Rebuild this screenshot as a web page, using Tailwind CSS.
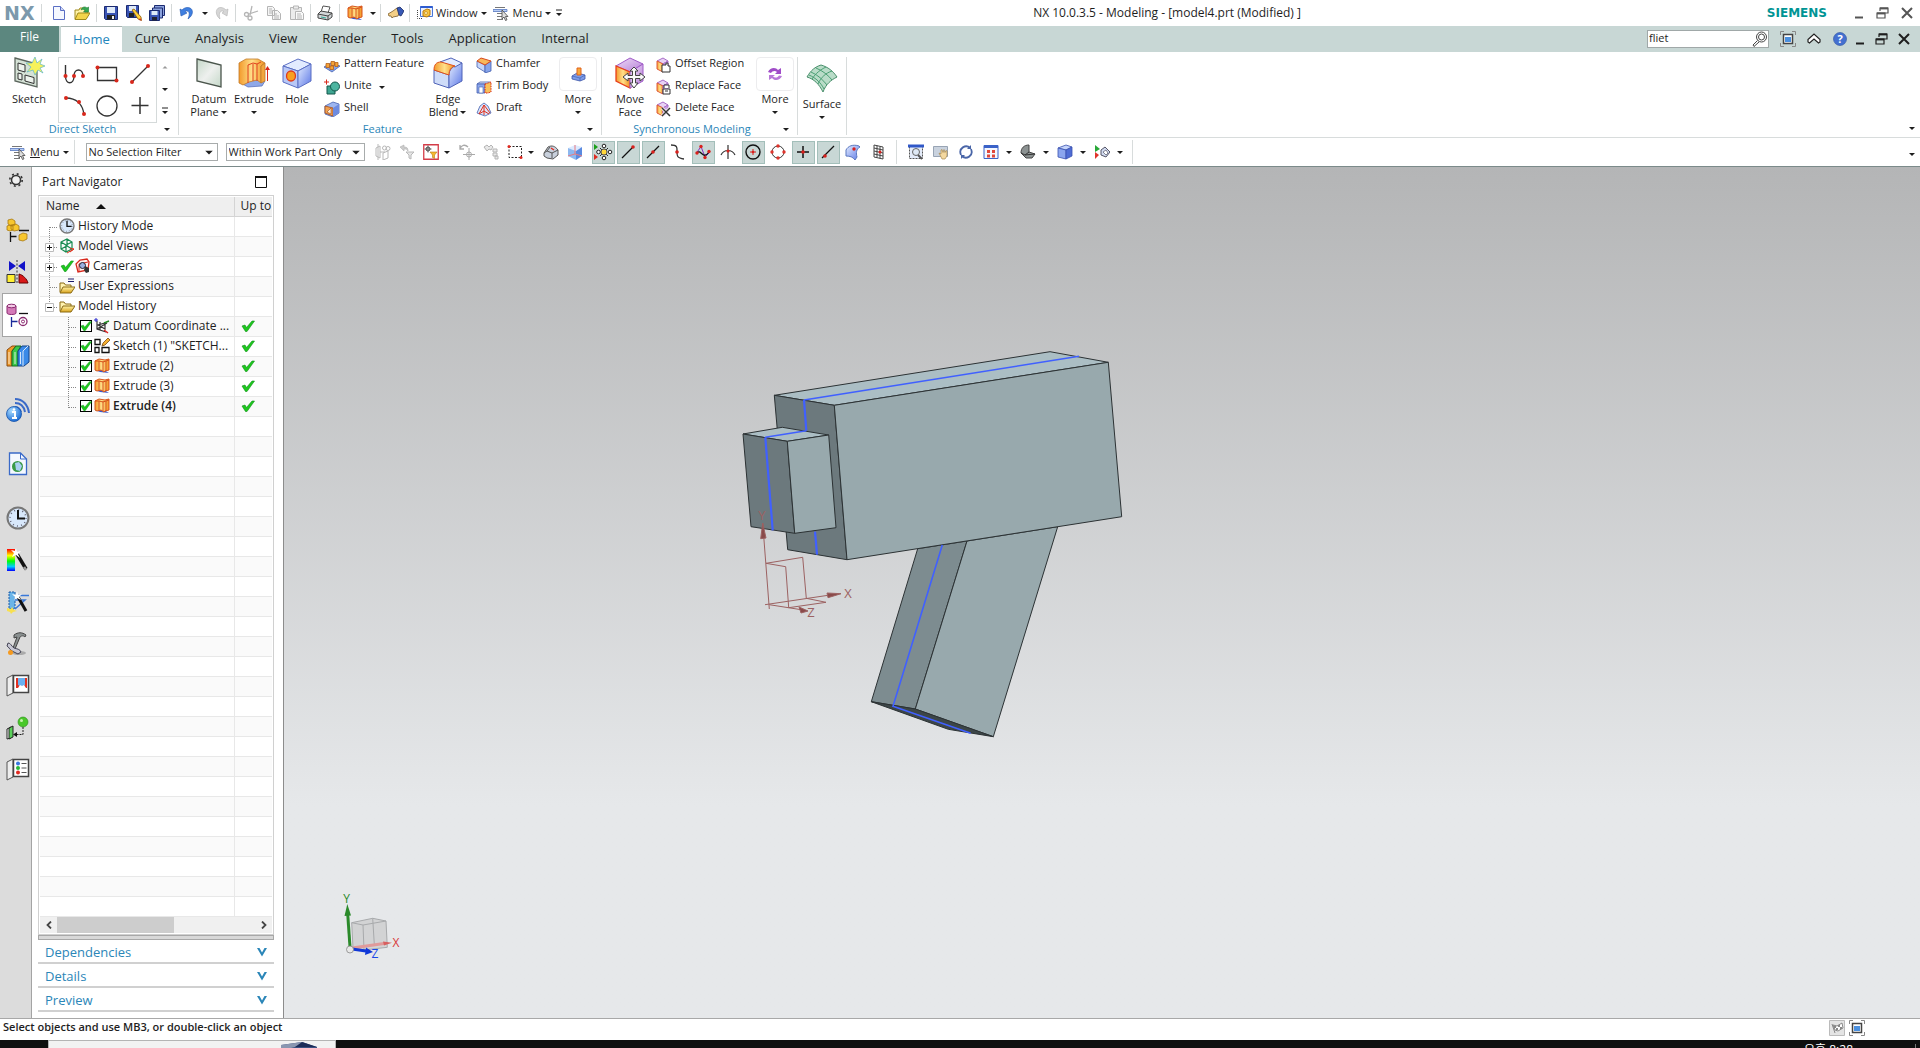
<!DOCTYPE html>
<html lang="en">
<head>
  <meta charset="utf-8">
  <meta name="viewport" content="width=device-width, initial-scale=1">
  <title>NX 10.0.3.5 - Modeling - [model4.prt (Modified) ]</title>
  <script src="https://cdn.jsdelivr.net/npm/@tailwindcss/browser@4"></script>
</head>
<body class="flex h-screen flex-col overflow-hidden bg-white font-['Open_Sans','Noto_Sans_CJK_KR',sans-serif] text-[11px] text-[#1e1e1e]">

<!-- Shared icons -->
<svg class="absolute size-0" aria-hidden="true">
  <defs>
    <linearGradient id="g-blue" x1="0" y1="0" x2="1" y2="1"><stop offset="0" stop-color="#e4edff"/><stop offset="1" stop-color="#5c78e6"/></linearGradient>
    <linearGradient id="g-orange" x1="0" y1="0" x2="1" y2="0"><stop offset="0" stop-color="#f39a2c"/><stop offset=".5" stop-color="#ffe08a"/><stop offset="1" stop-color="#f0901e"/></linearGradient>
    <linearGradient id="g-gold" x1="0" y1="0" x2="0" y2="1"><stop offset="0" stop-color="#fff3a8"/><stop offset="1" stop-color="#d9a21b"/></linearGradient>
    <linearGradient id="g-plane" x1="0" y1="0" x2="1" y2="1"><stop offset="0" stop-color="#c4d8c8"/><stop offset=".5" stop-color="#eef0ee"/><stop offset="1" stop-color="#c4d8c8"/></linearGradient>
    <linearGradient id="g-purple" x1="0" y1="0" x2="1" y2="1"><stop offset="0" stop-color="#efdcf8"/><stop offset="1" stop-color="#b57fd6"/></linearGradient>
    <linearGradient id="g-rainbow" x1="0" y1="0" x2="0" y2="1"><stop offset="0" stop-color="#f00"/><stop offset=".3" stop-color="#ff0"/><stop offset=".55" stop-color="#0f0"/><stop offset=".8" stop-color="#0cf"/><stop offset="1" stop-color="#00f"/></linearGradient>
    <radialGradient id="g-ball" cx=".35" cy=".3" r=".8"><stop offset="0" stop-color="#a9dcff"/><stop offset="1" stop-color="#0a5fd0"/></radialGradient>
  </defs>
  <symbol id="caret" viewBox="0 0 8 8"><path d="M1 3h6L4 6z" fill="#1e1e1e"/></symbol>
  <symbol id="caret-bar" viewBox="0 0 8 8"><path d="M1 1h6" stroke="#1e1e1e"/><path d="M1 4h6L4 7z" fill="#1e1e1e"/></symbol>
  <symbol id="menu" viewBox="0 0 16 16"><path d="M2 2.500h10M4 8.500h7M4 11.500h7M4 14.500h6" stroke="#777"/><path d="M0 4.500h14v2H0z" fill="#b9cdf2" stroke="#5577c0" stroke-width=".8"/><path d="M9 5v9l2-2 1.500 3.500 1.500-.7-1.500-3.300h2.500z" fill="#ddd" stroke="#444" stroke-width=".8"/></symbol>
  <symbol id="extrude" viewBox="0 0 16 16"><path d="M1 12l5 2 9 1-5-3z" fill="#3d59c8"/><path d="M1 3l4-2 6 1 4-1v11l-4 1-1 1-3-2-4 1-2-1z" fill="url(#g-orange)" stroke="#d8541c"/><path d="M5 3v10M9 3v10M12 3v10M1 3l4 0 4 1 6-2" stroke="#d8541c" fill="none"/></symbol>
  <symbol id="check" viewBox="0 0 14 12"><path d="M1 6l3-1 1.500 2.500L11 1h2.500L6 11.500H4.500z" fill="#1ec81e" stroke="#0f8f1a" stroke-width=".6"/></symbol>
  <symbol id="folder" viewBox="0 0 16 16"><path d="M1 13V4h4l1.500 2H12v2" fill="#fff2b0" stroke="#8a6a14"/><path d="M1 14l3-6h12l-4 6z" fill="url(#g-gold)" stroke="#8a6a14"/></symbol>
  <symbol id="restore" viewBox="0 0 16 16"><path d="M5 6V3h8v5h-3" fill="none" stroke="currentColor" stroke-width="1.200"/><path d="M5 3.400h8" stroke="currentColor" stroke-width="2"/><path d="M2 8h8v5H2z" fill="none" stroke="currentColor" stroke-width="1.200"/><path d="M2 8.400h8" stroke="currentColor" stroke-width="2"/></symbol>
  <symbol id="close" viewBox="0 0 16 16"><path d="M3 3l10 10M13 3L3 13" stroke="currentColor" stroke-width="2"/></symbol>
  <symbol id="minimize" viewBox="0 0 16 16"><path d="M4 12.500h8" stroke="currentColor" stroke-width="2"/></symbol>
  <symbol id="fit" viewBox="0 0 16 16"><path d="M4 .5H.5V4M12 .5h3.500V4M4 15.500H.5V12M12 15.500h3.500V12" fill="none" stroke="#888"/><path d="M3.500 3.500h9v9h-9z" fill="#fff" stroke="#444" stroke-width="1.500"/><path d="M5 6h6v5H5z" fill="#4a90e0"/></symbol>
  <symbol id="clock" viewBox="0 0 24 24"><circle cx="12" cy="12" r="10.500" fill="#d8e8fb" stroke="#777" stroke-width="2"/><circle cx="12" cy="12" r="8" fill="none" stroke="#667" stroke-width="1.500" stroke-dasharray="1 3.190"/><path d="M12 4v8.500h7" fill="none" stroke="#111" stroke-width="2"/></symbol>
  <symbol id="face-cube" viewBox="0 0 16 16"><path d="M2 4l6-3 5 3-5 3z" fill="#e8d2f4" stroke="#a86cc8"/><path d="M2 4l6 3v8l-6-3z" fill="url(#g-orange)" stroke="#e05a3a"/><path d="M8 7l5-3v7l-5 4z" fill="#c9a2e2" stroke="#a86cc8"/></symbol>
</svg>

<!-- Title bar -->
<header class="flex h-[26px] shrink-0 items-center bg-white">
  <div class="w-[41px] pl-1 font-['DejaVu_Sans',sans-serif] text-[19px] font-bold text-[#7c99ac]">NX</div>
  <div class="flex items-center gap-[7px] border-l border-[#d4d8d8] py-px pr-1.5 pl-[9px]">
    <button type="button" aria-label="New"><svg class="size-4" viewBox="0 0 16 16"><path d="M2.500 1.500h7l4 4v9h-11z" fill="#f5f8ff" stroke="#5b6fc4"/><path d="M9.500 1.500v4h4" fill="#cfd8f5" stroke="#5b6fc4"/></svg></button>
    <button type="button" aria-label="Open"><svg class="size-4" viewBox="0 0 16 16"><path d="M1 14V5h4l1-2h5v4h3v2" fill="#fff3a8" stroke="#a08a1c"/><path d="M1 14.500L4 8h12l-4 6.500z" fill="#f3d44a" stroke="#a08a1c"/><path d="M7 5c1-3 4-4 6-2l1.500-1v5h-5L11 5.500C10 4 8 4 7 5z" fill="#35a853" stroke="#1c7a34" stroke-width=".6"/></svg></button>
  </div>
  <div class="flex items-center gap-[7px] border-l border-[#d4d8d8] px-1.5 py-px">
    <button type="button" aria-label="Save"><svg class="size-4" viewBox="0 0 16 16"><path d="M1.500 1.500h13v13h-12l-1-1z" fill="#3a55b5" stroke="#1b2a70"/><path d="M4 2h8v6H4z" fill="#dfeaf8"/><path d="M4 10h8v4.500H4z" fill="#222"/><path d="M9 11h2v3H9z" fill="#eee"/></svg></button>
    <button type="button" aria-label="Save As"><svg class="size-4" viewBox="0 0 16 16"><path d="M.5 .5h12v12h-11l-1-1z" fill="#3a55b5" stroke="#1b2a70"/><path d="M3 1h7v5H3z" fill="#dfeaf8"/><path d="M3 8h5v4H3z" fill="#222"/><path d="M6 5l2-1 7 8 .5 3.500L12 14z" fill="#ffd23a" stroke="#8a5a10" stroke-width=".8"/><path d="M14 13l1.500 2.500L13 15z" fill="#d22"/></svg></button>
    <button type="button" aria-label="Save All"><svg class="size-4" viewBox="0 0 16 16"><path d="M5.500 .5h10v10h-10z" fill="#8ba2dd" stroke="#1b2a70"/><path d="M3.500 3h10v10h-10z" fill="#8ba2dd" stroke="#1b2a70"/><path d="M.5 5.500h10v10h-10z" fill="#3a55b5" stroke="#1b2a70"/><path d="M2.500 6h6v4h-6z" fill="#dfeaf8"/><path d="M3 12h5v3.500H3z" fill="#223"/></svg></button>
  </div>
  <div class="flex items-center gap-1.5 border-l border-[#d4d8d8] py-px pr-1 pl-[7px]">
    <button type="button" aria-label="Undo"><svg class="size-4" viewBox="0 0 16 16"><path d="M1 4l1 7 6-3-2-1.500c3-1.500 6 .5 3 7.500 7-5 5-12-1-11.500-2 .2-3.500 1-5 2.500z" fill="#3f7fe0" stroke="#2358b0" stroke-width=".6"/></svg></button>
    <button type="button" aria-label="Undo list"><svg class="size-2"><use href="#caret"/></svg></button>
    <button type="button" aria-label="Redo"><svg class="size-4" viewBox="0 0 16 16"><path d="M13 4l-1 7-5-3 2-1.500C6 5 3 7 5 14-1 9 1 2 6 2.500c2 .2 3.500 1 5 2.500z" fill="#d6d6d6" stroke="#b4b4b4" stroke-width=".6"/></svg></button>
  </div>
  <div class="flex items-center gap-[7px] border-l border-[#d4d8d8] py-px pr-[5px] pl-[7px]">
    <button type="button" aria-label="Cut"><svg class="size-4" viewBox="0 0 16 16" fill="none" stroke="#b5b5b5" stroke-width="1.300"><path d="M9 1L7 10M15 6L6 9"/><circle cx="3.500" cy="9.500" r="2"/><circle cx="7" cy="13" r="2"/></svg></button>
    <button type="button" aria-label="Copy"><svg class="size-4" viewBox="0 0 16 16" fill="#f6f6f6" stroke="#b5b5b5"><path d="M1.500 1.500h5l2 2v7h-7zM6.500 5.500h5l3 3v6h-8z"/><path d="M8 9h3M8 11h5M8 13h5M3 4h3M3 6h3M3 8h3"/></svg></button>
    <button type="button" aria-label="Paste"><svg class="size-4" viewBox="0 0 16 16" fill="#ececec" stroke="#b5b5b5"><path d="M1.500 2.500h11v12h-11z"/><path d="M4.500 1h5v3h-5z"/><path d="M6.500 6.500h6l2 2v6h-8z" fill="#fafafa"/><path d="M8 9h4M8 11h5M8 13h5"/></svg></button>
  </div>
  <div class="flex items-center border-l border-[#d4d8d8] py-px pr-1.5 pl-1.5">
    <button type="button" aria-label="Print"><svg class="size-4" viewBox="0 0 16 16"><path d="M6 1l7 1-2 6-7-1z" fill="#fff" stroke="#555"/><path d="M1 9l3-3 11 2v4l-4 3-10-2z" fill="#d2d6d8" stroke="#444"/><path d="M1 9l10 2 4-3M11 11v4" fill="none" stroke="#444"/><path d="M4 12l5 1" stroke="#3a9"/></svg></button>
  </div>
  <div class="flex items-center gap-1.5 border-l border-[#d4d8d8] py-px pr-[3px] pl-[7px]">
    <button type="button" aria-label="Extrude"><svg class="size-4"><use href="#extrude"/></svg></button>
    <button type="button" aria-label="Repeat list"><svg class="size-2"><use href="#caret"/></svg></button>
  </div>
  <div class="flex items-center border-l border-[#d4d8d8] py-px pr-[5px] pl-[7px]">
    <button type="button" aria-label="Touch mode"><svg class="size-4" viewBox="0 0 16 16"><path d="M0 9l5-3 4-3 4 3-3 5-5 1-1 1-1-2H1z" fill="#f4cf86" stroke="#7a5a28" stroke-width=".8"/><path d="M9 3l3-1 4 4-3 5-2-1z" fill="#3758b5" stroke="#1c2c66" stroke-width=".8"/></svg></button>
  </div>
  <div class="flex items-center border-l border-[#d4d8d8] py-px pl-[7px]">
    <button type="button" class="flex items-center">
      <svg class="size-4" viewBox="0 0 16 16"><path d="M3.500 1.500h12v10h-12z" fill="#eaf1ff" stroke="#4a78d8"/><path d="M3.500 2h12" stroke="#2d5bd0" stroke-width="2"/><path d="M5 13.500h-4.500v-9" fill="none" stroke="#444" stroke-dasharray="1 1"/><path d="M6 6l4-2 3 1v5l-3 2-4-1z" fill="#f8c640" stroke="#b97a10"/><circle cx="9" cy="8" r="1.500" fill="#fff0b0" stroke="#b97a10" stroke-width=".6"/></svg>
      <span class="ml-[3px]">Window</span><svg class="ml-0.5 size-2"><use href="#caret"/></svg>
    </button>
    <button type="button" class="ml-[5px] flex items-center">
      <svg class="size-4"><use href="#menu"/></svg>
      <span class="ml-1">Menu</span><svg class="ml-0.5 size-2"><use href="#caret"/></svg>
    </button>
    <button type="button" class="ml-[3px]" aria-label="Customize toolbar"><svg class="size-2"><use href="#caret-bar"/></svg></button>
  </div>
  <h1 class="flex-1 pl-1 text-center text-[12px]">NX 10.0.3.5 - Modeling - [model4.prt (Modified) ]</h1>
  <div class="font-['DejaVu_Sans',sans-serif] text-[12px] font-bold text-[#009494]">SIEMENS</div>
  <div class="ml-6 flex gap-2 pr-[5px] text-[#555]">
    <button type="button" aria-label="Minimize"><svg class="size-4"><use href="#minimize"/></svg></button>
    <button type="button" aria-label="Restore"><svg class="size-4"><use href="#restore"/></svg></button>
    <button type="button" aria-label="Close"><svg class="size-4"><use href="#close"/></svg></button>
  </div>
</header>

<!-- Ribbon tabs -->
<nav class="flex h-[26px] shrink-0 items-stretch gap-px bg-[#c8d7d5] text-[13px]">
  <button type="button" class="w-[59px] bg-[#5c877f] pb-1 text-center text-[12px] text-white">File</button>
  <a href="#" class="ml-px flex items-center border-t border-[#a8b4b2] bg-white px-3 text-[#2487bd]">Home</a>
  <a href="#" class="flex items-center px-3">Curve</a>
  <a href="#" class="flex items-center px-3">Analysis</a>
  <a href="#" class="flex items-center px-3">View</a>
  <a href="#" class="flex items-center px-3">Render</a>
  <a href="#" class="flex items-center px-3">Tools</a>
  <a href="#" class="flex items-center px-3">Application</a>
  <a href="#" class="flex items-center px-3">Internal</a>
  <div class="ml-auto flex items-center pr-2">
    <div class="flex h-[18px] w-[122px] items-center border border-[#a0a8a8] bg-white">
      <input type="text" value="fliet" aria-label="Command finder" class="min-w-0 flex-1 pb-0.5 pl-px text-[11px] outline-none">
      <button type="button" aria-label="Find command"><svg class="size-4" viewBox="0 0 16 16" fill="none" stroke="#444"><circle cx="9.500" cy="6" r="5"/><circle cx="9.500" cy="6" r="3"/><path d="M5.500 9.500L1 14l1 1.500L7 11"/></svg></button>
    </div>
    <button type="button" class="ml-[11px]" aria-label="Full screen"><svg class="size-4"><use href="#fit"/></svg></button>
    <button type="button" class="ml-2.5" aria-label="Minimize ribbon"><svg class="size-4" viewBox="0 0 16 16"><path d="M2 8.500L8 3l6 5.500v2.500l-1.500 1L8 8l-4.500 4L2 11z" fill="#fff" stroke="#222" stroke-width="1.200"/></svg></button>
    <button type="button" class="ml-2.5" aria-label="Help"><svg class="size-4" viewBox="0 0 16 16"><circle cx="8" cy="8" r="6.500" fill="#4470d0" stroke="#2a4fa0" stroke-width=".6"/><text x="8" y="12" text-anchor="middle" font-size="11" font-weight="bold" fill="#fff">?</text></svg></button>
    <button type="button" class="ml-1" aria-label="Minimize part window"><svg class="size-4"><use href="#minimize"/></svg></button>
    <button type="button" class="ml-1.5" aria-label="Restore part window"><svg class="size-4"><use href="#restore"/></svg></button>
    <button type="button" class="ml-1.5" aria-label="Close part window"><svg class="size-4"><use href="#close"/></svg></button>
  </div>
</nav>

<!-- Ribbon -->
<div class="flex h-[86px] shrink-0 border-b border-[#d8dcdc] pt-[5px] pb-0.5 leading-[13px]">
  <section class="flex flex-col border-r border-[#d8dcdc]">
    <div class="flex h-[66px] items-start">
      <button type="button" class="flex w-[58px] flex-col items-center">
        <svg class="size-8" viewBox="0 0 32 32"><path d="M2 1l22 6v23L2 24z" fill="#d5e2d6" stroke="#5c665e" stroke-width="1.300"/><path d="M5 6l7 2v7l-7-2zM5 16l4 1v6l-4-1zM12 18l9 2.500v6L12 24z" fill="#edf3ed" stroke="#333"/><path d="M22 0l2 6 5-4-2 5 5 2-5 2 3 5-5-3-3 5-2-5-6 2 4-5-5-4 6 0z" fill="#f7f25a" stroke="#5cb6c8" stroke-width=".7"/></svg>
        <span class="mt-[3px]">Sketch</span>
      </button>
      <div class="grid h-[66px] w-[99px] grid-cols-3 place-items-center border border-[#d5dada]">
        <button type="button" aria-label="Profile"><svg class="size-6" viewBox="0 0 24 24"><path d="M2.500 3v11c0 9 8.500 9 8.500 0 0-8 9-8 9 0" fill="none" stroke="#333" stroke-width="1.400"/><g fill="#d8281c"><circle cx="2.500" cy="14" r="2"/><circle cx="11" cy="14" r="2"/><circle cx="20" cy="14" r="2"/></g></svg></button>
        <button type="button" aria-label="Rectangle"><svg class="size-6" viewBox="0 0 24 24"><path d="M2.500 5.500h19v13h-19z" fill="none" stroke="#333" stroke-width="1.300"/><circle cx="2.500" cy="5.500" r="2" fill="#d8281c"/><circle cx="21.500" cy="18.500" r="2" fill="#d8281c"/></svg></button>
        <button type="button" aria-label="Line"><svg class="size-6" viewBox="0 0 24 24"><path d="M4 20L20 4" stroke="#333" stroke-width="1.300"/><circle cx="4" cy="20" r="2" fill="#d8281c"/><circle cx="20" cy="4" r="2" fill="#d8281c"/></svg></button>
        <button type="button" aria-label="Arc"><svg class="size-6" viewBox="0 0 24 24"><path d="M3 4c10 0 17 6 18 17" fill="none" stroke="#333" stroke-width="1.300"/><g fill="#d8281c"><circle cx="3" cy="4" r="2"/><circle cx="16" cy="8" r="2"/><circle cx="21" cy="20" r="2"/></g></svg></button>
        <button type="button" aria-label="Circle"><svg class="size-6" viewBox="0 0 24 24"><circle cx="12" cy="12" r="10" fill="none" stroke="#333" stroke-width="1.300"/></svg></button>
        <button type="button" aria-label="Point"><svg class="size-6" viewBox="0 0 24 24"><path d="M12 3v17M3.500 11.500h17" stroke="#333" stroke-width="1.500"/></svg></button>
      </div>
      <div class="mr-[5px] flex w-4 flex-col items-center gap-3.5 pt-1.5">
        <button type="button" aria-label="Scroll up"><svg class="block size-2" viewBox="0 0 8 8"><path d="M1.500 5.500h5L4 3z" fill="#999"/></svg></button>
        <button type="button" aria-label="Scroll down"><svg class="block size-2"><use href="#caret"/></svg></button>
        <button type="button" aria-label="Gallery"><svg class="block size-2"><use href="#caret-bar"/></svg></button>
      </div>
    </div>
    <div class="flex items-center leading-3"><h2 class="flex-1 pl-0.5 text-center text-[#2b86b8]">Direct Sketch</h2><svg class="mr-[7px] size-2"><use href="#caret"/></svg></div>
  </section>

  <section class="flex flex-col border-r border-[#d8dcdc]">
    <div class="flex h-[66px] items-start pr-[3px] pl-2">
      <button type="button" class="flex w-11 flex-col items-center">
        <svg class="size-8" viewBox="0 0 32 32"><path d="M4 2l24 6v22L4 24z" fill="url(#g-plane)" stroke="#4a554c" stroke-width="1.300"/></svg>
        <span class="mt-[3px]">Datum</span><span class="flex items-center">Plane<svg class="ml-px size-2"><use href="#caret"/></svg></span>
      </button>
      <button type="button" class="flex w-[46px] flex-col items-center">
        <svg class="size-8" viewBox="0 0 32 32"><path d="M1 25l8-4 18 3-3 5-14 1z" fill="#8ea8e8" stroke="#5068b8" stroke-width=".7"/><path d="M1 6l7-4h12l7 4-4 3v17l-4-3-8 2-6 3-4-2z" fill="url(#g-orange)" stroke="#c07828" stroke-width=".8"/><path d="M23 9l4-3v18l-4 2z" fill="#f2a63c" stroke="#c07828" stroke-width=".8"/><path d="M10 8v18M15 7v17M19 7v17M10 8l5-2 4 1 4-2" fill="none" stroke="#e0401c"/><path d="M29.500 24V12" stroke="#d8281c"/><path d="M27 13l2.500-4 2.500 4z" fill="#d8281c"/></svg>
        <span class="mt-[3px]">Extrude</span><svg class="mt-[3px] size-2"><use href="#caret"/></svg>
      </button>
      <button type="button" class="flex w-10 flex-col items-center">
        <svg class="size-8" viewBox="0 0 32 32"><path d="M2 9l15-7 13 5-13 7z" fill="#e2ebff" stroke="#5b6fc4"/><path d="M2 9l15 5v17L2 25z" fill="#b9c8f6" stroke="#5b6fc4"/><path d="M17 14l13-7v17l-13 7z" fill="url(#g-blue)" stroke="#5b6fc4"/><ellipse cx="10" cy="19" rx="4.500" ry="5" fill="#f8a020" stroke="#e03a1c" stroke-width="1.300"/></svg>
        <span class="mt-[3px]">Hole</span>
      </button>
      <div class="ml-[7px] flex w-[100px] flex-col gap-1.5">
        <button type="button" class="flex h-4 items-start gap-1 leading-3"><svg class="size-4 shrink-0" viewBox="0 0 16 16"><path d="M0 10l7-4 9 3-8 6z" fill="#86a4ea" stroke="#4561b0" stroke-width=".8"/><path d="M2 6.500h3.500v4H2zM7 4.500h3.500v4H7zM11 5.500h3v4h-3zM6 9h3.500v3.500H6z" fill="#f5a337" stroke="#b4611a" stroke-width=".8"/></svg><span class="whitespace-nowrap">Pattern Feature</span></button>
        <button type="button" class="flex h-4 items-start gap-1 leading-3"><svg class="size-4 shrink-0" viewBox="0 0 16 16"><path d="M0 3h5M2.500 .5v5" stroke="#d8281c"/><path d="M3 7h8v8H3z" fill="#3ea591" stroke="#14584c"/><circle cx="11" cy="7.500" r="4.500" fill="#4cb5a0" stroke="#14584c"/></svg><span>Unite</span><svg class="mt-1 ml-0.5 size-2"><use href="#caret"/></svg></button>
        <button type="button" class="flex h-4 items-start gap-1 leading-3"><svg class="size-4 shrink-0" viewBox="0 0 16 16"><path d="M1 5l8-4 6 2v9l-6 4-8-3z" fill="#9db6f0" stroke="#4561b0" stroke-width=".8"/><path d="M1 5l8 2v8l-8-3z" fill="#f0a050" stroke="#a04a1c" stroke-width=".8"/><path d="M3 11l4-4v6z" fill="#fff0d8" stroke="#a04a1c" stroke-width=".6"/><path d="M9 7l6-4v9l-6 3z" fill="#6d8be0"/></svg><span>Shell</span></button>
      </div>
      <button type="button" class="flex w-12 flex-col items-center">
        <svg class="size-8" viewBox="0 0 32 32"><path d="M2 13l15 5v13L2 26z" fill="#cfdcf8" stroke="#4f63b8"/><path d="M17 18c0-5 3-9 13-12v18l-13 7z" fill="url(#g-blue)" stroke="#4f63b8"/><path d="M8 5l11-4 11 5-7 4z" fill="#e2ebff" stroke="#4f63b8"/><path d="M2 13c0-5 2-8 7-8l14 4c-4 1-6 4-6 9z" fill="url(#g-orange)" stroke="#e0501c"/></svg>
        <span class="mt-[3px]">Edge</span><span class="flex items-center">Blend<svg class="ml-px size-2"><use href="#caret"/></svg></span>
      </button>
      <div class="ml-1 flex w-[82px] flex-col gap-1.5">
        <button type="button" class="flex h-4 items-start gap-1 leading-3"><svg class="size-4 shrink-0" viewBox="0 0 16 16"><path d="M1 4l8 4v7l-8-5z" fill="#c5d5f8" stroke="#4561b0" stroke-width=".8"/><path d="M9 8l6-4v10l-6 2z" fill="#86a4ea" stroke="#4561b0" stroke-width=".8"/><path d="M1 4l4-3 10 3-6 4z" fill="#f8b85a" stroke="#d8481c"/></svg><span>Chamfer</span></button>
        <button type="button" class="flex h-4 items-start gap-1 leading-3"><svg class="size-4 shrink-0" viewBox="0 0 16 16"><path d="M1 5l3-2h10v2H1z" fill="#e0e8fc" stroke="#4561b0" stroke-width=".8"/><path d="M1 5h8v9H1z" fill="#8aa5ec" stroke="#4561b0" stroke-width=".8"/><path d="M3 8h4v6H3z" fill="#fff" stroke="#4561b0" stroke-width=".6"/><path d="M9 5l6-2v10l-3 1H9z" fill="#f8c05a" stroke="#d8281c" stroke-dasharray="1.500 1"/></svg><span class="whitespace-nowrap">Trim Body</span></button>
        <button type="button" class="flex h-4 items-start gap-1 leading-3"><svg class="size-4 shrink-0" viewBox="0 0 16 16"><path d="M4 5l4-3 4 3 3 7-6 3-8-3z" fill="#dbe5fb" stroke="#4561b0" stroke-width=".8"/><path d="M8 4v10M8 4L3 13M8 4l6 8M3 13l5-3 5 3" fill="none" stroke="#e0301c"/></svg><span>Draft</span></button>
      </div>
      <button type="button" class="flex w-10 flex-col items-center">
        <span class="flex h-[34px] w-[38px] items-center justify-center rounded border border-[#ececee]"><svg class="size-4" viewBox="0 0 16 16"><path d="M2 10l5-3 8 2v4l-5 2-8-2z" fill="#7d9ce8" stroke="#3d57a8" stroke-width=".8"/><path d="M2 10l8 2 5-3M10 12v3" fill="none" stroke="#3d57a8" stroke-width=".6"/><path d="M7 2h4v7H7z" fill="#f8a83a" stroke="#e0621c"/></svg></span>
        <span class="mt-px">More</span><svg class="mt-[3px] size-2"><use href="#caret"/></svg>
      </button>
    </div>
    <div class="flex items-center leading-3"><h2 class="flex-1 text-center text-[#2b86b8]">Feature</h2><svg class="mr-[7px] size-2"><use href="#caret"/></svg></div>
  </section>

  <section class="flex flex-col border-r border-[#d8dcdc]">
    <div class="flex h-[66px] items-start pl-1.5">
      <button type="button" class="flex w-11 flex-col items-center">
        <svg class="size-8" viewBox="0 0 32 32"><path d="M2 9l14-8 13 6-13 8z" fill="url(#g-purple)" stroke="#a05cc8"/><path d="M2 9l14 6v16L2 24z" fill="url(#g-orange)" stroke="#e8401c" stroke-width="1.300"/><path d="M16 15l13-8v17l-13 7z" fill="url(#g-purple)" stroke="#a05cc8"/><path d="M20 10l4 4h-2.500v4.500H26V16l5 4-5 4v-2.500h-4.500V26H24l-4 5-4-5h2.500v-4.500H14V24l-5-4 5-4v2.500h4.500V14H16z" fill="#fafafa" stroke="#444"/></svg>
        <span class="mt-[3px]">Move</span><span>Face</span>
      </button>
      <div class="ml-[3px] flex w-[98px] flex-col gap-1.5">
        <button type="button" class="flex h-4 items-start gap-1 leading-3"><svg class="size-4 shrink-0" viewBox="0 0 16 16"><use href="#face-cube"/><path d="M7 8h4V6h2v3h2v6H7z" fill="#fff" stroke="#333"/></svg><span class="whitespace-nowrap">Offset Region</span></button>
        <button type="button" class="flex h-4 items-start gap-1 leading-3"><svg class="size-4 shrink-0" viewBox="0 0 16 16"><use href="#face-cube"/><path d="M8 10h7v5H8zM9 9V6h5v3M10 12h3" fill="#fff" stroke="#333"/></svg><span class="whitespace-nowrap">Replace Face</span></button>
        <button type="button" class="flex h-4 items-start gap-1 leading-3"><svg class="size-4 shrink-0" viewBox="0 0 16 16"><use href="#face-cube"/><path d="M7 7l8 8M15 7l-8 8" stroke="#fff" stroke-width="3"/><path d="M7 7l8 8M15 7l-8 8" stroke="#333" stroke-width="1.500"/></svg><span class="whitespace-nowrap">Delete Face</span></button>
      </div>
      <button type="button" class="flex w-11 flex-col items-center">
        <span class="flex h-[34px] w-[38px] items-center justify-center rounded border border-[#ececee]"><svg class="size-4" viewBox="0 0 16 16"><path d="M1 6c2-5 8-5 10-2l3-2v6H8l2-2C8 4 5 5 4 7z" fill="#a04cc8"/><path d="M15 10c-2 5-8 5-10 2l-3 2V9h6l-2 1.500c2 2 5 1 6-1z" fill="#b878d8"/></svg></span>
        <span class="mt-px">More</span><svg class="mt-[3px] size-2"><use href="#caret"/></svg>
      </button>
    </div>
    <div class="flex items-center leading-3"><h2 class="flex-1 text-center text-[#2b86b8]">Synchronous Modeling</h2><svg class="mr-[7px] size-2"><use href="#caret"/></svg></div>
  </section>

  <section class="border-r border-[#d8dcdc] pt-[5px]">
    <button type="button" class="flex w-12 flex-col items-center">
      <svg class="size-8" viewBox="0 0 32 32"><path d="M1 15C5 8 9 5 15 3c7 2 12 6 16 12-6 3-11 7-14 15C13 22 8 17 1 15z" fill="#b9dcc8" stroke="#4a8f6c"/><path d="M5 10c7 3 12 8 16 13M10 6c7 3 12 7 16 12M6 17c4-6 8-9 14-12M12 22c3-7 8-11 14-13M3 13c7 3 12 8 15 14" fill="none" stroke="#4a9f74"/></svg>
      <span class="mt-[3px]">Surface</span><svg class="mt-[3px] size-2"><use href="#caret"/></svg>
    </button>
  </section>
  <button type="button" class="mr-1 mb-[3px] ml-auto self-end" aria-label="Ribbon options"><svg class="size-2"><use href="#caret"/></svg></button>
</div>

<!-- Selection bar -->
<div class="flex h-[29px] shrink-0 items-center border-b border-[#7b8a8a] pl-2.5">
  <button type="button" class="flex items-center"><svg class="size-4"><use href="#menu"/></svg><span class="ml-1"><u>M</u>enu</span><svg class="ml-0.5 size-2"><use href="#caret"/></svg></button>
  <div class="ml-1 h-6 w-3 border-l border-[#d8dcdc]"></div>
  <label class="relative flex w-[132px] items-center">
    <select aria-label="Selection filter" class="h-[18px] w-full appearance-none border border-[#a8acac] bg-white pl-0.5 text-[11px] leading-4"><option>No Selection Filter</option></select>
    <svg class="pointer-events-none absolute right-1 size-2.5"><use href="#caret"/></svg>
  </label>
  <label class="relative ml-2 flex w-[139px] items-center">
    <select aria-label="Selection scope" class="h-[18px] w-full appearance-none border border-[#a8acac] bg-white pl-0.5 text-[11px] leading-4"><option>Within Work Part Only</option></select>
    <svg class="pointer-events-none absolute right-1 size-2.5"><use href="#caret"/></svg>
  </label>
  <div class="ml-2.5 flex items-center gap-2">
    <button type="button" aria-label="Type filter"><svg class="size-4" viewBox="0 0 16 16" fill="none" stroke="#b8b8b8"><path d="M1 4l4-2v12l-4-2zM5 8h5M8 9l5-2v7l-5 2zM3 0v16"/><circle cx="9.500" cy="4" r="2"/><circle cx="13" cy="4.500" r="2"/></svg></button>
    <button type="button" aria-label="Reset filters"><svg class="size-4" viewBox="0 0 16 16"><path d="M1 3l4-2v2c3 0 4 1 4 4-1-2-2-2-4-2v2z" fill="#ccc" stroke="#b0b0b0" stroke-width=".6"/><path d="M7 8h8l-3 3v4l-2-1v-3z" fill="#e6e6e6" stroke="#b8b8b8"/></svg></button>
    <div class="flex items-center gap-1">
      <button type="button" aria-label="Detailed filtering"><svg class="size-4" viewBox="0 0 16 16"><path d="M.75 .75h14.500v14.500H.75z" fill="#fff" stroke="#d43c48" stroke-width="1.300"/><circle cx="5" cy="5" r="2" fill="none" stroke="#444"/><path d="M5 1.500v7M1.500 5h7" stroke="#444" stroke-width=".8"/><path d="M7 8h7l-2.500 3v3.500l-2-1V11z" fill="#f5b92e" stroke="#b9791a" stroke-width=".6"/></svg></button>
      <svg class="size-2"><use href="#caret"/></svg>
    </div>
    <button type="button" aria-label="Rotate pivot"><svg class="size-4" viewBox="0 0 16 16" fill="none" stroke="#aaa"><path d="M10 4v12M4 10.500h12"/><circle cx="10" cy="10.500" r="2.500"/><path d="M1 5c1-4 5-5 8-2M1 1v4h4" stroke-width="1.300"/></svg></button>
    <button type="button" aria-label="Selection priority"><svg class="size-4" viewBox="0 0 16 16" fill="#e8e8e8" stroke="#b5b5b5"><path d="M1 3l3-2 2 2 2-2 2 2-2 3-2-1-2 2zM10 5h4v3h-4zM10 9h4v3h-4zM12 12h3v3h-3z"/></svg></button>
    <div class="flex items-center gap-1">
      <button type="button" aria-label="Rectangle selection"><svg class="size-4" viewBox="0 0 16 16"><path d="M2 2.500h12.500v11H2z" fill="none" stroke="#222" stroke-dasharray="2 1.500"/><circle cx="2" cy="2.500" r="1.500" fill="#e02a20"/><circle cx="14" cy="13.500" r="1.500" fill="#e02a20"/></svg></button>
      <svg class="size-2"><use href="#caret"/></svg>
    </div>
    <button type="button" aria-label="Allow hidden selection"><svg class="size-4" viewBox="0 0 16 16"><path d="M1 9l4-6c4-2 7-1 10 3v5l-5 4-6-1-3-2z" fill="#c8d0dc" stroke="#555"/><path d="M9 14V9l6-3M9 9L4 7 1 9M4 7l3-4" fill="none" stroke="#555"/><path d="M8 4l3 2" stroke="#e02a20" stroke-width="1.300"/></svg></button>
    <button type="button" aria-label="Highlight hidden edges"><svg class="size-4" viewBox="0 0 16 16"><path d="M1 4l7-3 7 2-6 4z" fill="#dceaff"/><path d="M1 4l8 3v9l-8-4z" fill="#8db8f0"/><path d="M9 7l6-4v9l-6 4z" fill="#5a8ae0"/><path d="M8 1v9l-7 2M8 10l7 2" fill="none" stroke="#e87a80"/></svg></button>
  </div>
  <div class="ml-[9px] flex items-center gap-0.5">
    <button type="button" aria-label="Enable snap point" class="flex h-[23px] w-[23px] items-center justify-center border border-[#a3bfba] bg-[#c8d7d5]"><svg class="size-5" viewBox="0 0 20 20"><path d="M1 2l4 3-4 3z" fill="#18a018"/><path d="M1 12l4 3-4 3z" fill="#e02a20"/><path d="M7 6l8 8M15 6l-8 8" stroke="#222"/><circle cx="11" cy="10" r="3" fill="#ffd83a" stroke="#555"/><g fill="#fff" stroke="#222"><circle cx="11" cy="4" r="1.800"/><circle cx="11" cy="16" r="1.800"/><circle cx="5.500" cy="10" r="1.800"/><circle cx="17" cy="10" r="1.800"/></g></svg></button>
    <button type="button" aria-label="End point" class="flex h-[23px] w-[23px] items-center justify-center border border-[#a3bfba] bg-[#c8d7d5]"><svg class="size-4" viewBox="0 0 16 16"><path d="M2 14L13 3" stroke="#111" stroke-width="1.300"/><circle cx="13" cy="3" r="1.800" fill="#d8201c"/></svg></button>
    <button type="button" aria-label="Mid point" class="flex h-[23px] w-[23px] items-center justify-center border border-[#a3bfba] bg-[#c8d7d5]"><svg class="size-4" viewBox="0 0 16 16"><path d="M2 14L14 2" stroke="#111" stroke-width="1.300"/><circle cx="8" cy="8" r="1.800" fill="#d8201c"/></svg></button>
    <button type="button" aria-label="Control point" class="flex h-[23px] w-[23px] items-center justify-center"><svg class="size-4" viewBox="0 0 16 16"><path d="M1 1c7 0 6 3 6 7s0 6 7 7" fill="none" stroke="#333" stroke-width="1.300"/><circle cx="7" cy="8" r="1.800" fill="#d8201c"/></svg></button>
    <button type="button" aria-label="Pole" class="flex h-[23px] w-[23px] items-center justify-center border border-[#a3bfba] bg-[#c8d7d5]"><svg class="size-4" viewBox="0 0 16 16"><path d="M1.500 9L6 2.500 10 13l5-5" fill="none" stroke="#8a2ac0"/><path d="M2 9c4-5 6 8 12-1" fill="none" stroke="#111" stroke-width="1.300"/><g fill="#d8201c"><circle cx="2" cy="9" r="1.700"/><circle cx="6" cy="2.500" r="1.700"/><circle cx="10" cy="13.500" r="1.700"/><circle cx="14" cy="7.500" r="1.700"/></g></svg></button>
    <button type="button" aria-label="Intersection point" class="flex h-[23px] w-[23px] items-center justify-center"><svg class="size-4" viewBox="0 0 16 16"><path d="M8 1v14M1 11c3-6 11-6 14 0" fill="none" stroke="#333" stroke-width="1.200"/><circle cx="8" cy="7" r="1.500" fill="#d8201c"/></svg></button>
    <button type="button" aria-label="Arc center" class="flex h-[23px] w-[23px] items-center justify-center border border-[#a3bfba] bg-[#c8d7d5]"><svg class="size-4" viewBox="0 0 16 16"><circle cx="8" cy="8" r="7" fill="none" stroke="#111" stroke-width="1.400"/><path d="M8 5v6M5 8h6" stroke="#d8201c"/><circle cx="8" cy="8" r="1.300" fill="#d8201c"/></svg></button>
    <button type="button" aria-label="Quadrant point" class="flex h-[23px] w-[23px] items-center justify-center"><svg class="size-4" viewBox="0 0 16 16"><circle cx="8" cy="8" r="6" fill="none" stroke="#333"/><g fill="#e0342c"><circle cx="8" cy="2" r="1.700"/><circle cx="8" cy="14" r="1.700"/><circle cx="2" cy="8" r="1.700"/><circle cx="14" cy="8" r="1.700"/></g></svg></button>
    <button type="button" aria-label="Existing point" class="flex h-[23px] w-[23px] items-center justify-center border border-[#a3bfba] bg-[#c8d7d5]"><svg class="size-4" viewBox="0 0 16 16"><path d="M8 2v12M2 8h12" stroke="#111" stroke-width="1.500"/><circle cx="8" cy="8" r="1.800" fill="#d8201c"/></svg></button>
    <button type="button" aria-label="Point on curve" class="flex h-[23px] w-[23px] items-center justify-center border border-[#a3bfba] bg-[#c8d7d5]"><svg class="size-4" viewBox="0 0 16 16"><path d="M2 14L14 2" stroke="#111" stroke-width="1.300"/><circle cx="5" cy="12" r="1.800" fill="#d8201c"/></svg></button>
    <button type="button" aria-label="Point on face" class="flex h-[23px] w-[23px] items-center justify-center"><svg class="size-4" viewBox="0 0 16 16"><path d="M1 6c2-4 7-6 13-4l1 1c-4 2-4 6-3 10l-2 3c-2-3-5-4-9-4z" fill="url(#g-blue)" stroke="#5b78c0"/><circle cx="9" cy="5" r="1.700" fill="#d8201c"/></svg></button>
    <button type="button" aria-label="Point on grid" class="flex h-[23px] w-[23px] items-center justify-center"><svg class="size-4" viewBox="0 0 16 16"><path d="M4 1l9 2v12l-9-2zM4 4l9 2M4 7l9 2M4 10l9 2M7 1.500v12M10 2.500v12" fill="none" stroke="#444"/><circle cx="10" cy="8" r="1.500" fill="#d8201c"/></svg></button>
  </div>
  <div class="ml-1.5 h-6 w-3 border-l border-[#d8dcdc]"></div>
  <div class="flex items-center gap-[9px]">
    <button type="button" aria-label="Zoom window"><svg class="size-4" viewBox="0 0 16 16"><path d="M1.500 2.500h13v12h-13z" fill="#e4ecfa" stroke="#555" stroke-dasharray="2 1"/><path d="M0 2h16" stroke="#3058c8" stroke-width="3"/><circle cx="8" cy="8" r="3.500" fill="#dfe9f5" stroke="#666"/><path d="M10 11l4 4" stroke="#555" stroke-width="2"/></svg></button>
    <button type="button" aria-label="Pan"><svg class="size-4" viewBox="0 0 16 16"><path d="M.5 2.500h14v10H.5z" fill="#c9d2de" stroke="#98a4b4"/><path d="M6 9l2 1V6l1-.5 1 3 1-3 1 3 1-2 1 .5v5l-2 3H9z" fill="#f3d8a0" stroke="#a88a50" stroke-width=".7"/></svg></button>
    <button type="button" aria-label="Rotate"><svg class="size-4" viewBox="0 0 16 16" fill="none" stroke="#4a66a8" stroke-width="1.800"><path d="M3 11C0 4 8 0 12 4M13 5c3 7-5 11-9 7"/><path d="M13 1v4H9zM3 15v-4h4z" fill="#4a66a8" stroke="none"/></svg></button>
  </div>
  <div class="ml-[9px] flex items-center gap-[7px]">
    <div class="flex items-center gap-1.5"><button type="button" aria-label="Fit view"><svg class="size-4" viewBox="0 0 16 16"><path d="M1 1.500h14v13H1z" fill="#f4f7ff" stroke="#3a62c8"/><path d="M1 2.500h14" stroke="#3a62c8" stroke-width="3"/><path d="M4 6h3v3H4zM9 6h3v3H9zM4 10.500h3v3H4zM9 10.500h3v3H9z" fill="#e0483c"/></svg></button><svg class="size-2"><use href="#caret"/></svg></div>
    <div class="flex items-center gap-1.5"><button type="button" aria-label="Orient view"><svg class="size-4" viewBox="0 0 16 16"><path d="M1 9c0-5 3-8 8-8v7l6 2-3 4H6z" fill="#8c9292" stroke="#444"/><path d="M1 9l4 2 10-1M9 8l-4 3" fill="none" stroke="#333"/></svg></button><svg class="size-2"><use href="#caret"/></svg></div>
    <div class="flex items-center gap-1.5"><button type="button" aria-label="Rendering style"><svg class="size-4" viewBox="0 0 16 16"><path d="M1 4l8-3 6 2-6 3z" fill="#c5d4fa" stroke="#3a52b0" stroke-width=".8"/><path d="M1 4l8 2v9l-8-2z" fill="#8ba5ee" stroke="#3a52b0" stroke-width=".8"/><path d="M9 6l6-3v9l-6 3z" fill="#4f6cd4" stroke="#3a52b0" stroke-width=".8"/></svg></button><svg class="size-2"><use href="#caret"/></svg></div>
    <div class="flex items-center gap-1.5"><button type="button" aria-label="Show and hide"><svg class="size-4" viewBox="0 0 16 16"><path d="M1 1l5 4-5 3z" fill="#28a838"/><path d="M1 8l4 3-4 4z" fill="#e0342c"/><path d="M7 6l4-3 5 5-4 5-5-2z" fill="#d0daf0" stroke="#556"/><path d="M9 8l3-2 2 3-2 2z" fill="#fff" stroke="#556" stroke-width=".7"/></svg></button><svg class="size-2"><use href="#caret"/></svg></div>
  </div>
  <div class="ml-2 h-6 border-l border-[#d8dcdc]"></div>
  <button type="button" class="mt-1 mr-1 ml-auto" aria-label="Toolbar options"><svg class="size-2"><use href="#caret"/></svg></button>
</div>

<div class="flex min-h-0 flex-1">
  <!-- Resource bar -->
  <nav class="flex w-8 shrink-0 flex-col border-r border-[#a4a4a4] bg-[#dcdcdc]">
    <button type="button" class="flex h-[26px] items-center justify-center" aria-label="Resource bar options"><svg class="size-4" viewBox="0 0 16 16"><circle cx="8" cy="8" r="4.500" fill="#f0f0f0" stroke="#333" stroke-width="1.500"/><circle cx="8" cy="8" r="6.200" fill="none" stroke="#333" stroke-width="1.600" stroke-dasharray="2 2.870"/></svg></button>
    <button type="button" class="mt-4 flex h-[42px] items-center justify-end pr-px" aria-label="Assembly Navigator"><svg class="size-6" viewBox="0 0 24 24"><path d="M13 12.500h10M4.500 14v10M4.500 18.500h6" stroke="#111" stroke-width="1.300" fill="none"/><g fill="#f7c62e" stroke="#a97a12" stroke-width=".8"><path d="M2 2l4-1 3 2v4l-4 1-3-2zM5 7l5-1 3 2v4l-5 1-3-2zM1 8l3-1 3 1v4l-3 1-3-1z"/><path d="M13 17l4-2 4 1v5l-4 2-4-1z"/></g></svg></button>
    <button type="button" class="flex h-[42px] items-center justify-end pr-px" aria-label="Constraint Navigator"><svg class="size-6" viewBox="0 0 24 24"><path d="M3 1l7 5-7 5zM19 1l-7 5 7 5z" fill="#1212c8"/><path d="M11 0v24" stroke="#333" stroke-dasharray="2 1.500"/><path d="M1 14.500h8v8H1z" fill="#ffee30" stroke="#333"/><path d="M13 14v9h9c-1-4-5-8-9-9z" fill="#d81818" stroke="#600"/></svg></button>
    <button type="button" class="-mr-px ml-0.5 flex h-11 items-center justify-end border-y border-l border-[#a4a4a4] bg-white pr-0.5" aria-label="Part Navigator"><svg class="size-6" viewBox="0 0 24 24"><path d="M1 3v7c0 2 9 2 9 0V3" fill="#d47ab8" stroke="#8a2a70"/><ellipse cx="5.500" cy="3" rx="4.500" ry="1.800" fill="#f2c8e4" stroke="#8a2a70"/><path d="M13 10.500h9" stroke="#111" stroke-width="1.300"/><path d="M5.500 14v10M5.500 18.500h6" stroke="#1a2a9a" stroke-width="1.300"/><circle cx="17" cy="18.500" r="4" fill="#fff" stroke="#8a2a70" stroke-width="1.300"/><circle cx="17" cy="18.500" r="1.500" fill="none" stroke="#8a2a70"/></svg></button>
    <button type="button" class="-mt-0.5 flex h-[42px] items-center justify-end pr-px" aria-label="Reuse Library"><svg class="size-6" viewBox="0 0 24 24"><path d="M1 6l5-4h4L6 7v15H1z" fill="#f09a28" stroke="#8a4a10"/><path d="M6 7l4-5h5l-3 5v15H6z" fill="#3cc84a" stroke="#146a20"/><path d="M12 7l4-5h7v16l-5 4h-6z" fill="#3a8ae8" stroke="#14448a"/><path d="M17 7l5-5M17 7v15M3 8v12M9 8v12M14.500 8v12" stroke="#fff" stroke-width=".8"/></svg></button>
    <button type="button" class="mt-3 flex h-[42px] items-center justify-end pr-px" aria-label="HD3D Tools"><svg class="size-6" viewBox="0 0 24 24"><path d="M9 1c8 0 13 6 14 14M9 5c6 0 9 4 10 9M9 9c3 0 5 2 6 5" fill="none" stroke="#3a6ac8" stroke-width="2"/><circle cx="8" cy="16" r="7.500" fill="url(#g-ball)" stroke="#1450a8" stroke-width=".8"/><path d="M6 14h3v6M6 20h5" fill="none" stroke="#fff" stroke-width="2"/><circle cx="8" cy="11.500" r="1.300" fill="#fff"/></svg></button>
    <button type="button" class="mt-3 flex h-[42px] items-center justify-end pr-px" aria-label="Web Browser"><svg class="size-6" viewBox="0 0 24 24"><path d="M3.500 1h11l6 6v15.500h-17z" fill="#f4f8ff" stroke="#3a6ac8" stroke-width="1.300"/><path d="M14.500 1v6h6" fill="none" stroke="#3a6ac8"/><circle cx="11.500" cy="14.500" r="5.500" fill="#3a9a48"/><path d="M9 11l4-1 3 4-2 5-4-1z" fill="#a9d0f2"/></svg></button>
    <button type="button" class="mt-3 flex h-[42px] items-center justify-end pr-px" aria-label="History"><svg class="size-6"><use href="#clock"/></svg></button>
    <button type="button" class="flex h-[42px] items-center justify-end pr-px" aria-label="System Materials"><svg class="size-6" viewBox="0 0 24 24"><path d="M1 1h8v22H1z" fill="url(#g-rainbow)"/><path d="M11 6l9 15" stroke="#111" stroke-width="3.500"/><path d="M18 19l2 3" stroke="#999" stroke-width="2.500"/><path d="M10 0l1 4 4-1-3 3 2 4-4-3-4 2 2-4-3-3 4 1z" fill="#fff"/></svg></button>
    <button type="button" class="flex h-[42px] items-center justify-end pr-px" aria-label="Process Studio"><svg class="size-6" viewBox="0 0 24 24"><path d="M3 2h6v17H3z" fill="#6ab4e8" stroke="#1a5aa8" stroke-dasharray="2 1"/><path d="M9 5.500h14M9 10h10L9 19" fill="none" stroke="#3a78d8" stroke-width="1.500"/><path d="M1 18l4 1 1-2 2 3 3 1-4 1-2 2-1-2-3-1z" fill="#f8e050"/><path d="M12 7l8 14" stroke="#111" stroke-width="3"/><path d="M11 1l1 4 4-1-3 3 2 3-4-2-3 2 1-3-3-3 4 1z" fill="#fff"/></svg></button>
    <button type="button" class="flex h-[42px] items-center justify-end pr-px" aria-label="Manufacturing Wizards"><svg class="size-6" viewBox="0 0 24 24"><ellipse cx="13" cy="21" rx="7" ry="2" fill="#aaa"/><path d="M8 3c4-3 8-3 12 0l-1 2c-2-2-4-1-5 0l-5 12-2-1 4-11-3 1z" fill="#8a9090" stroke="#444"/><path d="M2 11c3 0 3 3 6 5 3 1 6 1 7 4l-3 2-6-3c-3-2-3-4-5-5z" fill="#c8c8d4" stroke="#445"/><circle cx="4.500" cy="20.500" r="2.500" fill="#f59a20"/></svg></button>
    <button type="button" class="flex h-[42px] items-center justify-end pr-px" aria-label="Roles"><svg class="size-6" viewBox="0 0 24 24"><path d="M1 4l6-3v18l-6 3z" fill="#eee" stroke="#555"/><path d="M7.500 1.500h15v17h-15z" fill="#fff" stroke="#444" stroke-width="1.500"/><path d="M10 4h11v10H10z" fill="#e03020"/><path d="M12 4h7v7l-3 2-4-2z" fill="#6ab0f0"/><path d="M12 14l2-3 2 1 2-1 2 3z" fill="#fff"/></svg></button>
    <button type="button" class="flex h-[42px] items-center justify-end pr-px" aria-label="System Scenes"><svg class="size-6" viewBox="0 0 24 24"><circle cx="17" cy="6" r="5" fill="#4ac82a" stroke="#2a8a1a" stroke-width=".6"/><circle cx="15.500" cy="4.500" r="1.500" fill="#c8f0b0"/><path d="M17 11v7.500H9" fill="none" stroke="#222" stroke-dasharray="2 1"/><path d="M7 18.500l4-2.500v5z" fill="#111"/><path d="M1 13l4-2v11l-4 1z" fill="#fff" stroke="#222"/><path d="M3 12l4-2v11l-4 2z" fill="#5ad05a" stroke="#222"/></svg></button>
    <button type="button" class="flex h-[42px] items-center justify-end pr-px" aria-label="Palettes"><svg class="size-6" viewBox="0 0 24 24"><path d="M1 4l6-3v18l-6 3z" fill="#eee" stroke="#555"/><path d="M7.500 1.500h15v17h-15z" fill="#fff" stroke="#444" stroke-width="1.500"/><circle cx="12" cy="5.500" r="2" fill="#3a78e0"/><circle cx="12" cy="10" r="2" fill="#28b838"/><circle cx="12" cy="14.500" r="2" fill="#e02a20"/><path d="M15.500 5.500h5M15.500 10h5M15.500 14.500h5" stroke="#555"/></svg></button>
  </nav>

  <!-- Part Navigator -->
  <aside class="flex w-[252px] shrink-0 flex-col border-r border-[#8c8c8c] pr-[9px] pl-1.5">
    <div class="flex h-7 shrink-0 items-center pt-0.5 pr-[7px] pl-1 text-[12px]">
      <h2 class="flex-1">Part Navigator</h2>
      <button type="button" aria-label="Maximize"><svg class="block size-3" viewBox="0 0 12 12"><path d="M.5 1h11v10.500H.5z" fill="none" stroke="#111"/><path d="M0 1h12" stroke="#111" stroke-width="2"/></svg></button>
    </div>
    <div class="flex min-h-0 flex-1 flex-col border border-[#d0d0d0] p-px">
      <div class="min-h-0 flex-1 overflow-hidden">
        <table class="w-full table-fixed text-[12px] leading-[18px] whitespace-nowrap">
          <thead>
            <tr class="h-[19px] bg-[#efefef]">
              <th class="w-[194px] border-r border-b border-[#d4d4d4] p-0 pl-1.5 text-left font-normal"><span class="flex items-center gap-4">Name<svg class="h-1.5 w-2.5" viewBox="0 0 10 6"><path d="M0 6l5-5 5 5z" fill="#111"/></svg></span></th>
              <th class="overflow-hidden border-b border-[#d4d4d4] p-0 pl-1.5 text-left font-normal">Up to</th>
            </tr>
          </thead>
          <tbody id="tree" class="[&_td]:h-5 [&_td]:border-b [&_td]:border-[#e8e8e8] [&_td]:p-0 [&_td:first-child]:border-r [&_tr:nth-child(even)]:bg-[#fafafa]">
            <tr><td><div class="flex h-[19px] items-center"><svg class="h-[19px] w-[19px]" viewBox="0 0 19 19"><path d="M9.500 10v9M10 10.500h8" stroke="#888" stroke-dasharray="1 1"/></svg><svg class="size-4"><use href="#clock"/></svg><span class="ml-[3px]">History Mode</span></div></td><td></td></tr>
            <tr><td><div class="flex h-[19px] items-center"><svg class="h-[19px] w-[19px]" viewBox="0 0 19 19"><path d="M9.500 0v19M10 10.500h8" stroke="#888" stroke-dasharray="1 1"/><path d="M5.500 6.500h8v8h-8z" fill="#fff" stroke="#bbb"/><path d="M7 10.500h5M9.500 8v5" stroke="#111"/></svg><svg class="size-4" viewBox="0 0 16 16"><path d="M2 4l6-3 5 3v7l-6 3-5-3zM2 4l5 3 6-3M7 7v7M2 11l6-3 5 3M8 1v7" fill="none" stroke="#168a50" stroke-width="1.200"/><path d="M8 15l7-4M11 14l4-3-4-.5" stroke="#e0301c" fill="none"/></svg><span class="ml-[3px]">Model Views</span></div></td><td></td></tr>
            <tr><td><div class="flex h-[19px] items-center"><svg class="h-[19px] w-[19px]" viewBox="0 0 19 19"><path d="M9.500 0v19M10 10.500h8" stroke="#888" stroke-dasharray="1 1"/><path d="M5.500 6.500h8v8h-8z" fill="#fff" stroke="#bbb"/><path d="M7 10.500h5M9.500 8v5" stroke="#111"/></svg><svg class="ml-px h-3 w-3.5"><use href="#check"/></svg><svg class="size-4" viewBox="0 0 16 16"><path d="M2 6l4-4 7-1 2 3-1 8-10 2z" fill="#fff0ee" stroke="#d8281c" stroke-width="1.300"/><path d="M5 6l9-2M5 6v8" stroke="#d8281c"/><circle cx="8.500" cy="7.500" r="3" fill="#9ab0e0" stroke="#223"/><path d="M11 8l4 2v4l-3 1-2-3z" fill="#333"/></svg><span class="ml-[3px]">Cameras</span></div></td><td></td></tr>
            <tr><td><div class="flex h-[19px] items-center"><svg class="h-[19px] w-[19px]" viewBox="0 0 19 19"><path d="M9.500 0v19M10 10.500h8" stroke="#888" stroke-dasharray="1 1"/></svg><svg class="size-4" viewBox="0 0 16 16"><g transform="translate(0 1)"><use href="#folder"/></g><path d="M9 1h6M9 3.500h6" stroke="#1a1a6a" stroke-width="1.200"/></svg><span class="ml-[3px]">User Expressions</span></div></td><td></td></tr>
            <tr><td><div class="flex h-[19px] items-center"><svg class="h-[19px] w-[19px]" viewBox="0 0 19 19"><path d="M9.500 0v7M10 10.500h8" stroke="#888" stroke-dasharray="1 1"/><path d="M5.500 6.500h8v8h-8z" fill="#fff" stroke="#bbb"/><path d="M7 10.500h5" stroke="#111"/></svg><svg class="size-4"><use href="#folder"/></svg><span class="ml-[3px]">Model History</span></div></td><td></td></tr>
          </tbody>
        </table>
      </div>
      <div class="flex h-4 shrink-0 items-center bg-[#f0f0f0]">
        <button type="button" class="flex w-[17px] justify-center" aria-label="Scroll left"><svg class="size-2" viewBox="0 0 8 8"><path d="M6 .5L2.500 4 6 7.500" fill="none" stroke="#444" stroke-width="1.800"/></svg></button>
        <div class="flex h-full flex-1"><div class="w-[59%] bg-[#cdcdcd]"></div></div>
        <button type="button" class="flex w-[17px] justify-center" aria-label="Scroll right"><svg class="size-2" viewBox="0 0 8 8"><path d="M2 .5L5.500 4 2 7.500" fill="none" stroke="#444" stroke-width="1.800"/></svg></button>
      </div>
    </div>
    <div class="h-[5px] shrink-0 border border-[#a8a8a8] bg-[#d8d8d8]"></div>
    <div class="mb-1.5 flex shrink-0 flex-col text-[13px] leading-5 text-[#2b86b8]">
      <button type="button" class="flex h-6 items-center justify-between border-b-2 border-[#d0d0d0] pt-0.5 pr-1.5 pl-[7px]">Dependencies<svg class="h-2.5 w-3" viewBox="0 0 12 10"><path d="M1 1h2.500L6 5.500 8.500 1H11L6 9.500z" fill="#2b86b8"/></svg></button>
      <button type="button" class="flex h-6 items-center justify-between border-b-2 border-[#d0d0d0] pt-0.5 pr-1.5 pl-[7px]">Details<svg class="h-2.5 w-3" viewBox="0 0 12 10"><path d="M1 1h2.500L6 5.500 8.500 1H11L6 9.500z" fill="#2b86b8"/></svg></button>
      <button type="button" class="flex h-6 items-center justify-between border-b-2 border-[#d0d0d0] pt-0.5 pr-1.5 pl-[7px]">Preview<svg class="h-2.5 w-3" viewBox="0 0 12 10"><path d="M1 1h2.500L6 5.500 8.500 1H11L6 9.500z" fill="#2b86b8"/></svg></button>
    </div>
  </aside>

  <!-- Graphics window -->
  <main class="min-w-0 flex-1 bg-linear-to-b from-[#b4b5b6] to-[#e6e8ea] to-75%">
    <svg class="h-full w-full" viewBox="284 167 1636 851" role="img" aria-label="Model view">
      <g stroke="#2c3234" stroke-width="1" stroke-linejoin="round">
        <!-- grip -->
        <path d="M917.700 548.700L967 541 915.300 709 871.300 701.700z" fill="#7d8c90"/>
        <path d="M967 541l90.700-14.300L993.300 736.700 915.300 709z" fill="#98a9ad"/>
        <path d="M871.300 701.700L915.300 709 993.300 736.700 948.300 729.300z" fill="#3c4648"/>
        <!-- body -->
        <path d="M774.300 395.300L1050 351.700 1108.300 362.300 834.300 405.300z" fill="#abbec4"/>
        <path d="M774.300 395.300L834.300 405.300 847 559.700 787.700 549.700z" fill="#6c797d"/>
        <path d="M834.300 405.300L1108.300 362.300 1121.700 516.700 847 559.700z" fill="#98a9ad"/>
        <!-- nozzle -->
        <path d="M743 434L782.300 427.300 828.700 435 787.300 441.300z" fill="#abbec4"/>
        <path d="M743 434L787.300 441.300 794.700 533.300 751 526.700z" fill="#6c797d"/>
        <path d="M787.300 441.300L828.700 435 836 527.700 794.700 533.300z" fill="#98a9ad"/>
      </g>
      <g fill="none" stroke="#4060ff">
        <path d="M1079 356.300L804 400M806.300 430.700L765.300 437.300M942.300 545L893 706.300 970.700 733.300" stroke-width="1.600"/>
        <path d="M804 400L806.300 430.700M765.300 437.300L772.700 530.300M815 531.700L817 554.700" stroke-width="2.200"/>
      </g>
      <!-- datum coordinate system -->
      <g fill="none" stroke="#9c6262">
        <path d="M769.300 609L762.700 523M765 604.700L830 595M769.300 604.700L800 609.500M766 563.300L802.700 557.300 806.300 598.300 826 602.300 788.700 607.700 785.700 566.700 766 563.300"/>
        <path d="M760.700 538.700L762.700 523 766 538zM827 593l14 .7-13 4zM799 607l9 4-7 2z" fill="#8a4a4a"/>
      </g>
      <g fill="#9c6262" font-size="13" text-anchor="middle"><text x="762" y="520">Y</text><text x="848" y="598">X</text><text x="811" y="617">Z</text></g>
      <!-- view triad -->
      <path d="M351.700 922.700L372.700 918.300 386 921 387.300 947.300 364 950 353 948z" fill="#d2d3d4" stroke="#a8aaac"/>
      <path d="M351.700 922.700L363 925 386 921M363 925l1 25M372.700 918.300l1.600 26" fill="none" stroke="#a8aaac"/>
      <path d="M352 948L384 943.500" stroke="#e09a9a" stroke-width="3"/><path d="M383 941.500l9 1.200-8 2.800z" fill="#d86060"/>
      <path d="M350 947L347.700 914" stroke="#2a8a2a" stroke-width="3"/><path d="M344.500 916L347.300 904 351 915.500z" fill="#2a8a2a"/>
      <path d="M352 949l14 2" stroke="#1038d8" stroke-width="3"/><path d="M366 947.500l7 4.500-8 3z" fill="#1038d8"/>
      <circle cx="350" cy="949.500" r="3.500" fill="#e8e8e8" stroke="#888" stroke-width=".8"/>
      <g font-size="12" text-anchor="middle"><text x="346.500" y="903" fill="#2a8a2a">Y</text><text x="396" y="947" fill="#d83a3a">X</text><text x="375" y="958" fill="#1a48e8">Z</text></g>
    </svg>
  </main>
</div>

<!-- Status line -->
<footer class="flex h-[22px] shrink-0 items-center border-t border-[#a8a8a8] bg-white pr-[55px] pl-[3px]">
  <p class="flex-1 pb-1 font-semibold">Select objects and use MB3, or double-click an object</p>
  <div class="flex gap-1 pb-1">
    <svg class="size-4" viewBox="0 0 16 16"><path d="M.5 .5h15v15H.5z" fill="#e4e4e4" stroke="#bbb"/><path d="M3 4l3 9M4 5l4 1 5-3 1 5-5 3-3-1z" fill="#fff" stroke="#888"/><path d="M5 6h2v2H5zM9 5h2v2H9zM7 8h2v2H7zM11 7h2v2h-2z" fill="#888"/></svg>
    <button type="button" aria-label="Full screen"><svg class="size-4"><use href="#fit"/></svg></button>
  </div>
</footer>

<!-- Desktop taskbar -->
<div class="flex h-2 shrink-0 items-start overflow-hidden bg-[#0f0f0f] pl-12">
  <div class="flex h-2 w-72 justify-end border border-b-0 border-[#b4b4b4] bg-[#f2f2f2] pr-[18px]"><svg class="h-2 w-9" viewBox="0 0 36 8"><path d="M0 4L21 1l15 5v2H0z" fill="#3a5080"/><path d="M0 4l21-3 5 2L6 8H0z" fill="#8a96b0"/><path d="M21 1l15 5H14z" fill="#1c2c58"/></svg></div>
  <span class="mt-1 mr-1 ml-auto flex border-r border-[#777] pr-[62px] text-[12px] leading-3 text-white">오후 8:28</span>
</div>

<script>
  const features = [
    { name: 'Datum Coordinate ...', icon: '<path d="M3 3v8l9 3M3 11l10-6M6 4v8M4 7l7 4V5z" fill="none" stroke="#333" stroke-width="1.200"/><path d="M0 2h4M2 0v4" stroke="#22c"/><path d="M10 5l5-2" stroke="#282" stroke-width="1.500"/><path d="M10 12l4 3" stroke="#d22" stroke-width="1.500"/>' },
    { name: 'Sketch (1) "SKETCH...', icon: '<path d="M1 1.500h5v5H1zM1 9.500h4v5H1zM8 9.500h7v5H8z" fill="#fff" stroke="#111" stroke-width="1.300"/><path d="M8 8l1-3 5-5 2 2-5 5z" fill="#f5b030" stroke="#7a4a10" stroke-width=".8"/>' },
    { name: 'Extrude (2)', icon: '<use href="#extrude"/>' },
    { name: 'Extrude (3)', icon: '<use href="#extrude"/>' },
    { name: 'Extrude (4)', icon: '<use href="#extrude"/>', current: true },
  ]
  const emptyRows = 45

  const tree = document.getElementById('tree')
  let rows = ''

  for (const [i, f] of features.entries()) {
    const last = i === features.length - 1
    rows += `<tr>
      <td><div class="flex h-[19px] items-center">
        <svg class="h-[19px] w-10" viewBox="0 0 40 19"><path d="M28.500 0v${last ? 11 : 19}M29 10.500h8" stroke="#888" stroke-dasharray="1 1"/></svg>
        <span class="relative flex size-3">
          <input type="checkbox" checked id="feature-${i}" class="size-3 appearance-none border border-black bg-white">
          <svg class="pointer-events-none absolute inset-0 size-3"><use href="#check"/></svg>
        </span>
        <svg class="ml-0.5 size-4" viewBox="0 0 16 16">${f.icon}</svg>
        <label for="feature-${i}" class="${f.current ? 'ml-[3px] font-semibold' : 'ml-[3px]'}">${f.name}</label>
      </div></td>
      <td><svg class="ml-1.5 h-3 w-3.5"><use href="#check"/></svg></td>
    </tr>`
  }

  for (let i = 0; i < emptyRows; i++) {
    rows += '<tr><td></td><td></td></tr>'
  }

  tree.insertAdjacentHTML('beforeend', rows)
</script>
</body>
</html>
